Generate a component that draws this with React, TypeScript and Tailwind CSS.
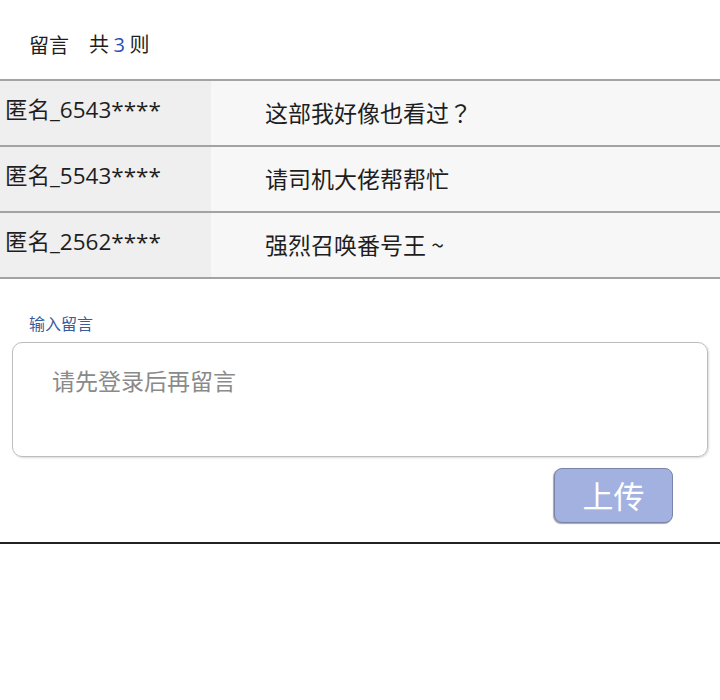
import React from "react";

const comments = [
  { name: "匿名_6543****", text: "这部我好像也看过", tail: "？" },
  { name: "匿名_5543****", text: "请司机大佬帮帮忙", tail: "" },
  { name: "匿名_2562****", text: "强烈召唤番号王 ~", tail: "" },
];

export default function App() {
  return (
    <div
      className="w-[720px] bg-white text-[#1e1e1e]"
      style={{ fontFamily: '"Noto Sans CJK SC", "Noto Sans", sans-serif' }}
    >
      {/* Header */}
      <div className="flex h-[79px] items-center pl-[29px] pt-[10px] text-[20px]">
        <span>留言</span>
        <span className="ml-[20px]">
          共 <span className="font-['Open_Sans'] text-[#2a4fb5]">3</span> 则
        </span>
      </div>

      {/* Comment list */}
      <div className="border-t-2 border-[#a3a3a3]">
        {comments.map((c, i) => (
          <div key={i} className="flex h-[66px] border-b-2 border-[#a3a3a3]">
            <div className="flex w-[211px] items-center bg-[#efefef] pb-[6px] pl-[5px] font-['Open_Sans','Noto_Sans_CJK_SC',sans-serif] text-[22.5px]">
              {c.name}
            </div>
            <div className="flex flex-1 items-center bg-[#f7f7f7] pb-[2px] pl-[54px] text-[23px]">
              {c.text}
              {c.tail && <span className="font-['Noto_Sans_CJK_TC',sans-serif]">{c.tail}</span>}
            </div>
          </div>
        ))}
      </div>

      {/* Input */}
      <div className="border-b-2 border-[#222] pb-[19px]">
        <div className="pl-[29px] pt-[33px] text-[16px] leading-[22px] text-[#3a5b9e]">输入留言</div>
        <div className="mx-[12px] mt-[8px] h-[115px] rounded-[10px] border border-[#bdbdbd] pl-[39px] pt-[20px] text-[23px] text-[#8a8a8a] shadow-[1px_1px_2px_rgba(0,0,0,0.15)]">
          请先登录后再留言
        </div>
        <div className="mt-[11px] flex justify-end pr-[47px]">
          <button className="flex h-[55px] w-[119px] items-center justify-center rounded-[8px] border border-[#7a84a8] bg-[#a3b1e1] text-[31px] text-white shadow-[-1px_1px_1px_rgba(0,0,0,0.35)]">
            上传
          </button>
        </div>
      </div>
    </div>
  );
}
